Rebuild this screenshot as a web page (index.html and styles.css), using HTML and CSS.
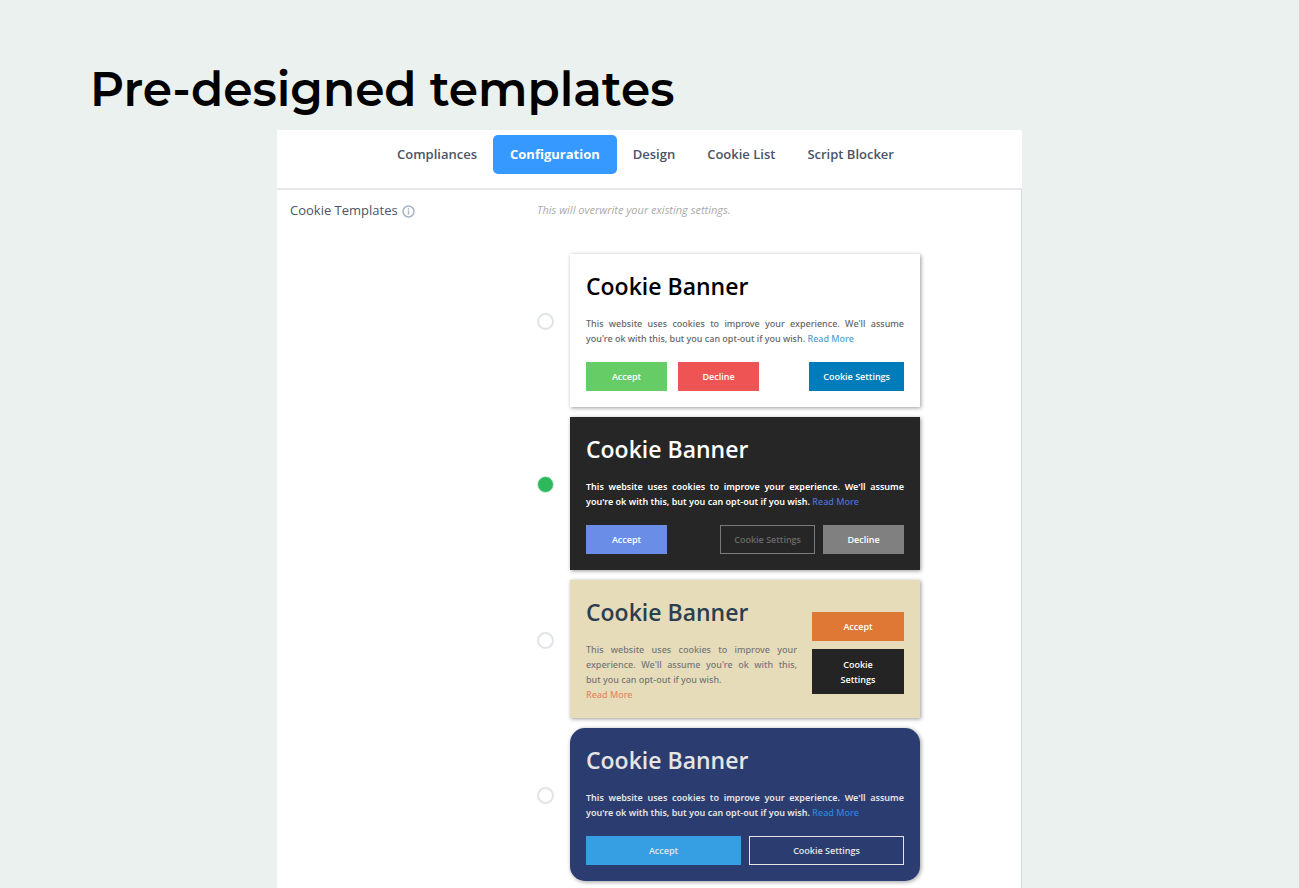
FILE: index.html
```
<!DOCTYPE html>
<html lang="en">
<head>
    <meta charset="UTF-8">
    <meta name="viewport" content="width=device-width, initial-scale=1.0">
    <title>Pre-designed templates</title>
    <link rel="stylesheet" href="styles.css">
</head>
<body>
    <h1 class="page-title">Pre-designed templates</h1>

    <main class="panel">
        <nav class="tabs">
            <a class="tab" href="#compliances">Compliances</a>
            <a class="tab active" href="#configuration">Configuration</a>
            <a class="tab" href="#design">Design</a>
            <a class="tab" href="#cookie-list">Cookie List</a>
            <a class="tab" href="#script-blocker">Script Blocker</a>
        </nav>

        <div class="settings">
            <div class="settings-label">
                <span id="templatesLabel">Cookie Templates</span>
                <svg class="info" viewBox="0 0 14 14" aria-hidden="true">
                    <circle cx="7" cy="7" r="5.9" fill="none" stroke="#a9b3c3" stroke-width="1.6"/>
                    <path d="M7 6v4.2" stroke="#a9b3c3" stroke-width="1.6"/>
                    <circle cx="7" cy="4.1" r="0.9" fill="#a9b3c3"/>
                </svg>
            </div>

            <div class="settings-field">
                <p class="hint">This will overwrite your existing settings.</p>

                <div class="templates" role="radiogroup" aria-labelledby="templatesLabel">
                    <div class="template">
                        <input type="radio" name="template" id="template1" aria-label="Light template">
                        <section class="banner light">
                            <h2>Cookie Banner</h2>
                            <p>This website uses cookies to improve your experience. We'll assume you're&nbsp;ok with this, but you can opt-out if you wish. <a href="#">Read More</a></p>
                            <div class="actions">
                                <button class="btn accept">Accept</button>
                                <button class="btn decline">Decline</button>
                                <button class="btn cookie-settings push">Cookie Settings</button>
                            </div>
                        </section>
                    </div>

                    <div class="template">
                        <input type="radio" name="template" id="template2" aria-label="Dark template" checked>
                        <section class="banner dark">
                            <h2>Cookie Banner</h2>
                            <p>This website uses cookies to improve your experience. We'll assume you're&nbsp;ok with this, but you can opt-out if you wish. <a href="#">Read More</a></p>
                            <div class="actions">
                                <button class="btn accept">Accept</button>
                                <button class="btn cookie-settings push">Cookie Settings</button>
                                <button class="btn decline">Decline</button>
                            </div>
                        </section>
                    </div>

                    <div class="template">
                        <input type="radio" name="template" id="template3" aria-label="Sand template">
                        <section class="banner sand">
                            <div class="banner-text">
                                <h2>Cookie Banner</h2>
                                <p>This website uses cookies to improve your experience. We'll assume you're ok with this, but&nbsp;you can opt-out if you wish.<br><a href="#">Read More</a></p>
                            </div>
                            <div class="actions">
                                <button class="btn accept">Accept</button>
                                <button class="btn cookie-settings">Cookie Settings</button>
                            </div>
                        </section>
                    </div>

                    <div class="template">
                        <input type="radio" name="template" id="template4" aria-label="Navy template">
                        <section class="banner navy">
                            <h2>Cookie Banner</h2>
                            <p>This website uses cookies to improve your experience. We'll assume you're&nbsp;ok with this, but you can opt-out if you wish. <a href="#">Read More</a></p>
                            <div class="actions">
                                <button class="btn accept">Accept</button>
                                <button class="btn cookie-settings">Cookie Settings</button>
                            </div>
                        </section>
                    </div>
                </div>
            </div>
        </div>
    </main>
</body>
</html>
```
FILE: styles.css
```
* {
    box-sizing: border-box;
}

body {
    margin: 0;
    min-height: 100vh;
    display: flex;
    flex-direction: column;
    background-color: #ebf1ef;
    font-family: "Open Sans", "Noto Sans", sans-serif;
    color: #4b5468;
}

h1, h2, p {
    margin: 0;
}

a {
    text-decoration: none;
}

.page-title {
    padding: 60px 90px 10px;
    font-family: Montserrat, Inter, sans-serif;
    font-size: 47px;
    line-height: 60px;
    font-weight: 600;
    color: #000;
}

.panel {
    flex: 1;
    display: flex;
    flex-direction: column;
    width: 100%;
    max-width: 745px;
    margin: 0 auto;
    background-color: #fff;
}

.tabs {
    display: flex;
    justify-content: center;
    padding: 5px 8px 14px 0;
    border-bottom: 2px solid #e5e7eb;
}

.tab {
    padding: 0 16px;
    font-size: 13px;
    line-height: 39px;
    font-weight: 600;
    color: #4b5468;
}

.tab.active {
    padding: 0 17px;
    border-radius: 5px;
    background-color: #3699ff;
    font-weight: 700;
    color: #fff;
}

.settings {
    flex: 1;
    display: flex;
    padding: 10px 13px 6px;
    border-right: 1px solid #d5d9e2;
}

.settings-label {
    display: flex;
    align-items: center;
    align-self: flex-start;
    gap: 4px;
    width: 247px;
    font-size: 13px;
    line-height: 20px;
}

.info {
    width: 13px;
    height: 13px;
    margin-top: 2px;
}

.hint {
    font-size: 11px;
    line-height: 20px;
    font-style: italic;
    color: #aaa;
}

.templates {
    display: flex;
    flex-direction: column;
    gap: 10px;
    margin-top: 34px;
}

.template {
    display: flex;
    align-items: center;
    gap: 16px;
}

.template input {
    appearance: none;
    width: 17px;
    height: 17px;
    margin: 0 0 18px;
    border: 2px solid #e1e3e8;
    border-radius: 50%;
    background-color: #fff;
}

.template input:checked {
    border: 1px solid #d9f0e1;
    background-color: #2eb85c;
}

.banner {
    width: 350px;
    padding: 16px;
    box-shadow: 1px 1px 4px rgba(0, 0, 0, 0.4);
}

.banner h2 {
    font-size: 23px;
    line-height: 33px;
    font-weight: 600;
}

.banner p {
    margin-top: 13px;
    font-family: "Noto Sans", "Open Sans", sans-serif;
    font-size: 9px;
    line-height: 15px;
    font-weight: 500;
    text-align: justify;
}

.actions {
    display: flex;
    gap: 8px;
    margin-top: 16px;
}

.btn {
    min-width: 81px;
    min-height: 29px;
    padding: 0 13px;
    border: 1px solid transparent;
    background: none;
    font-family: inherit;
    font-size: 9px;
    line-height: 15px;
    font-weight: 600;
    color: #fff;
}

.push {
    margin-left: auto;
}

.light {
    background-color: #fff;
    color: #666;
}

.light h2 {
    color: #000;
}

.light a {
    color: #549fd0;
}

.light .accept {
    margin-right: 3px;
    background-color: #66cc66;
}

.light .decline {
    background-color: #ef5454;
}

.light .cookie-settings {
    background-color: #007cba;
}

.dark {
    background-color: #262626;
    color: #fff;
}

.dark a {
    color: #4f6fd6;
}

.dark .accept {
    background-color: #6a8ee8;
}

.dark .cookie-settings {
    border-color: #7a7a7a;
    color: #6a6a6a;
}

.dark .decline {
    background-color: #808080;
}

.dark p,
.navy p {
    font-weight: 600;
}

.dark a,
.navy a {
    font-weight: 500;
}

.sand {
    display: flex;
    align-items: center;
    gap: 15px;
    background-color: #e6dcba;
    color: #777;
}

.sand h2 {
    color: #2c3e50;
}

.sand a {
    color: #e08a62;
}

.banner-text {
    flex: 1;
}

.sand .actions {
    flex-direction: column;
    width: 92px;
    margin-top: 8px;
}

.sand .accept {
    background-color: #de7834;
}

.sand .cookie-settings {
    min-height: 45px;
    padding: 0 20px;
    background-color: #242424;
}

.navy {
    border-radius: 15px;
    background-color: #2b3d70;
    color: #e5e5e5;
}

.navy a {
    color: #2d84dc;
}

.navy .btn {
    flex: 1;
    color: #e5e5e5;
}

.navy .accept {
    background-color: #369ee3;
}

.navy .cookie-settings {
    border-color: #e5e5e5;
}
```
